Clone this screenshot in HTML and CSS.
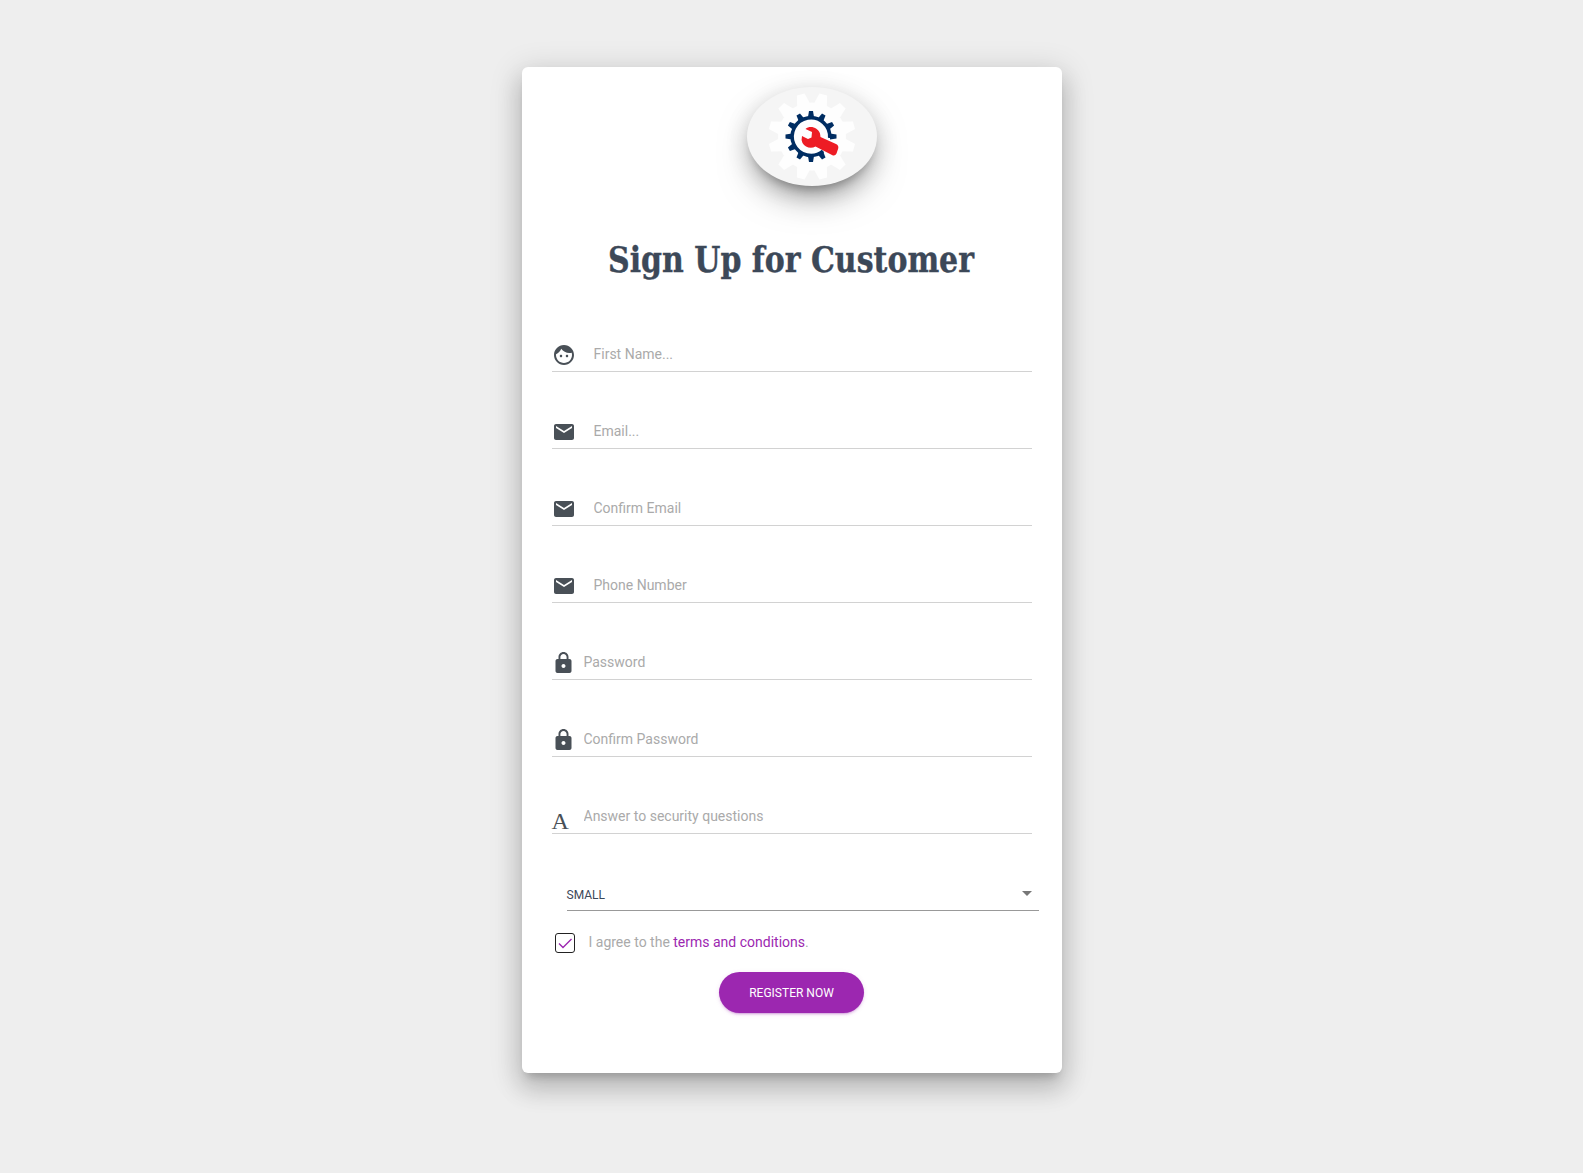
FILE: index.html
```html
<!DOCTYPE html>
<html lang="en">
<head>
<meta charset="utf-8">
<title>Sign Up for Customer</title>
<link rel="stylesheet" href="styles.css">
</head>
<body>
<svg class="defs" aria-hidden="true">
  <symbol id="mail" viewBox="0 0 24 24"><path d="M20 4H4c-1.1 0-1.99.9-1.99 2L2 18c0 1.1.9 2 2 2h16c1.100 0 2-.9 2-2V6c0-1.100-.9-2-2-2zm0 4l-8 5-8-5V6l8 5 8-5v2z"/></symbol>
  <symbol id="lock" viewBox="0 0 24 24"><path transform="translate(-.5 0)" d="M18 8h-1V6c0-2.760-2.240-5-5-5S7 3.240 7 6v2H6c-1.100 0-2 .9-2 2v10c0 1.100.9 2 2 2h12c1.100 0 2-.9 2-2V10c0-1.100-.9-2-2-2zm-6 9c-1.100 0-2-.9-2-2s.9-2 2-2 2 .9 2 2-.9 2-2 2zm3.100-9H8.900V6c0-1.710 1.390-3.100 3.100-3.100s3.100 1.390 3.100 3.100v2z"/></symbol>
  <symbol id="face" viewBox="0 0 24 24"><path d="M9 11.750c-.69 0-1.250.56-1.250 1.250s.56 1.250 1.250 1.250 1.250-.56 1.250-1.250-.56-1.250-1.250-1.250zm6 0c-.69 0-1.250.56-1.250 1.250s.56 1.250 1.250 1.250 1.250-.56 1.250-1.250-.56-1.250-1.250-1.250zM12 2C6.480 2 2 6.480 2 12s4.480 10 10 10 10-4.480 10-10S17.520 2 12 2zm0 18c-4.410 0-8-3.590-8-8 0-.29.02-.58.05-.86 2.360-1.050 4.230-2.980 5.210-5.370C11.070 8.330 14.050 10 17.420 10c.78 0 1.530-.09 2.250-.26.21.71.33 1.470.33 2.260 0 4.410-3.590 8-8 8z"/></symbol>
</svg>
<main class="card">
  <div class="logo">
    <svg width="130" height="99" viewBox="-65 -49.500 130 99">
      <g fill="#fefefe">
        <circle r="34"/>
        <g id="h"><path d="M-7-31L-4-43.500H4L7-31ZM-7 31L-4 43.500H4L7 31Z" transform="rotate(15)"/><path d="M-7-31L-4-43.500H4L7-31ZM-7 31L-4 43.500H4L7 31Z" transform="rotate(45)"/><path d="M-7-31L-4-43.500H4L7-31ZM-7 31L-4 43.500H4L7 31Z" transform="rotate(75)"/></g>
        <use href="#h" transform="rotate(90)"/>
      </g>
      <g transform="translate(-1 0)">
        <g fill="#002d62">
          <g id="t"><path d="M-3.100-19L-2-25.500H2L3.100-19Z"/><path d="M-3.100-19L-2-25.500H2L3.100-19Z" transform="rotate(30)"/><path d="M-3.100-19L-2-25.500H2L3.100-19Z" transform="rotate(60)"/></g>
          <use href="#t" transform="rotate(270)"/><use href="#t" transform="rotate(180)"/>
          <path d="M-3.100-19L-2-25.500H2L3.100-19Z" transform="rotate(90)"/>
          <path d="M-3.100-19L-2-25.500H2L3.100-19Z" transform="rotate(150)"/>
        </g>
        <path d="M18.700 1.500A18.800 18.800 0 1 0 12 14.500" fill="none" stroke="#002d62" stroke-width="3.500"/>
        <path fill="#ed1c24" d="M-5.500-7.500C-1-11.500 7-9 9-3L9.500 .5 25 7.500Q28 9 27.200 12L25.500 17Q24 20 21 18.500L4.500 10C0 12.500-6 11-8.500 6.500Q-10 3-9-.5L-3 2.500.5 1 1-4.500Z"/>
      </g>
    </svg>
  </div>
  <h1 class="title"><svg width="368" height="50"><text x="1" y="35.500" textLength="366" lengthAdjust="spacingAndGlyphs">Sign Up for Customer</text></svg></h1>
  <form class="form">
    <label class="field"><svg class="icon"><use href="#face"/></svg><input type="text" placeholder="First Name..."></label>
    <label class="field"><svg class="icon"><use href="#mail"/></svg><input type="text" placeholder="Email..."></label>
    <label class="field"><svg class="icon"><use href="#mail"/></svg><input type="text" placeholder="Confirm Email"></label>
    <label class="field"><svg class="icon"><use href="#mail"/></svg><input type="text" placeholder="Phone Number"></label>
    <label class="field tight"><svg class="icon"><use href="#lock"/></svg><input type="password" placeholder="Password"></label>
    <label class="field tight"><svg class="icon"><use href="#lock"/></svg><input type="password" placeholder="Confirm Password"></label>
    <label class="field tight"><span class="letter">A</span><input type="text" placeholder="Answer to security questions"></label>
    <div class="select"><span>SMALL</span><i class="caret"></i></div>
    <div class="agree">
      <span class="check"><svg width="18" height="18" viewBox="0 0 18 18"><path d="M3 9.500L7 13.500L15.500 5" fill="none" stroke="#9c27b0" stroke-width="1.400"/></svg></span>
      <span class="terms">I agree to the <a href="#">terms and conditions</a>.</span>
    </div>
    <button class="register" type="button">REGISTER NOW</button>
  </form>
</main>
</body>
</html>
```
FILE: styles.css
```css
* { box-sizing: border-box; }
body {
  margin: 0;
  height: 1173px;
  padding-top: 67px;
  background: #eee;
  font: 14px/20px Roboto, sans-serif;
  overflow: hidden;
}
.defs { display: none; }
.card {
  width: 540px;
  height: 1006px;
  margin: 0 auto 0 522px;
  background: #fff;
  border-radius: 6px;
  padding: 20px 30px 0;
  display: flex;
  flex-direction: column;
  box-shadow: 0 16px 24px 2px rgba(0,0,0,.14), 0 6px 30px 5px rgba(0,0,0,.12), 0 8px 10px -5px rgba(0,0,0,.2);
}
.logo {
  width: 130px;
  height: 99px;
  margin-left: 195px;
  flex: none;
  border-radius: 50%;
  background: #f5f5f5;
  box-shadow: 0 16px 38px -12px rgba(0,0,0,.56), 0 4px 25px 0 rgba(0,0,0,.12), 0 8px 10px -5px rgba(0,0,0,.2);
}
.logo svg { display: block; }
.title { margin: 50px 0 0 55px; height: 50px; }
.title svg { display: block; overflow: visible; }
.title text {
  font: 700 34.5px "Roboto Slab", "DejaVu Serif", serif;
  fill: #3c4858;
  stroke: #3c4858;
  stroke-width: .4px;
}
.form { margin-top: 9px; display: flex; flex-direction: column; }
.field {
  height: 77px;
  padding-bottom: 4px;
  border-bottom: 1px solid #d2d2d2;
  display: flex;
  align-items: flex-end;
  gap: 17.5px;
  color: #495057;
}
.tight { gap: 7.5px; }
.icon { width: 24px; height: 24px; fill: currentColor; flex: none; }
.letter {
  width: 24px;
  height: 24px;
  font: 24px/32px "Liberation Serif", serif;
  text-indent: -.5px;
}
.field input {
  flex: 1;
  height: 20px;
  margin-bottom: 3px;
  padding: 0;
  border: 0;
  outline: 0;
  background: none;
  font: 14px/20px Roboto, sans-serif;
}
.field input::placeholder { color: #aaa; opacity: 1; }
.select {
  height: 77px;
  width: 472px;
  margin-left: 15px;
  padding: 0 7px 5px 0;
  border-bottom: 1px solid #999;
  display: flex;
  align-items: flex-end;
  justify-content: space-between;
  font-size: 12px;
  text-indent: -.5px;
  color: #3c4858;
}
.caret {
  border: 5px solid transparent;
  border-top-color: #777;
  border-bottom: 0;
  margin-bottom: 9px;
}
.agree {
  margin: 22px 0 0 3px;
  height: 20px;
  display: flex;
  gap: 13.5px;
  color: #aaa;
}
.terms { line-height: 18px; }
.agree a { color: #9c27b0; text-decoration: none; }
.check { width: 20px; height: 20px; border: 1px solid #222; border-radius: 3px; }
.check svg { display: block; }
.register {
  width: 145px;
  height: 41px;
  margin: 19px 0 0 167px;
  padding: 2px 0 0;
  border: 0;
  border-radius: 30px;
  background: #9c27b0;
  color: #fff;
  font: 12px/17px Roboto, sans-serif;
  box-shadow: 0 2px 2px 0 rgba(156,39,176,.14), 0 3px 1px -2px rgba(156,39,176,.2), 0 1px 5px 0 rgba(156,39,176,.12);
}
```
